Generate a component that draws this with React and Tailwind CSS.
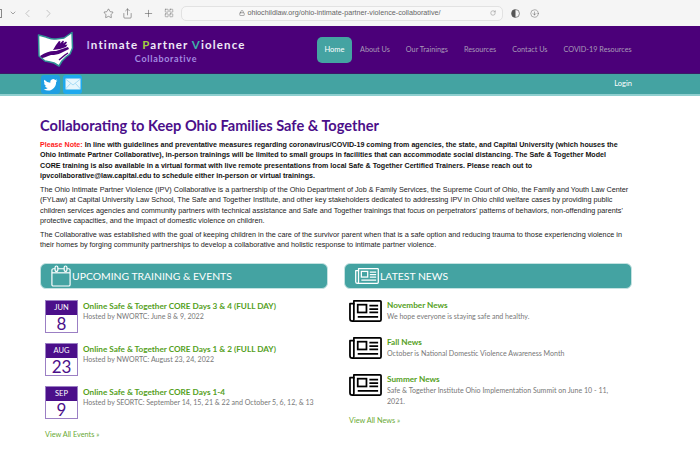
import { ChevronDown, ChevronLeft, ChevronRight, Star, Share, Plus, LayoutGrid, Lock, RotateCw, CircleArrowDown } from "lucide-react";

const events = [
  { month: "JUN", day: "8", title: "Online Safe & Together CORE Days 3 & 4 (FULL DAY)", host: "Hosted by NWORTC: June 8 & 9, 2022" },
  { month: "AUG", day: "23", title: "Online Safe & Together CORE Days 1 & 2 (FULL DAY)", host: "Hosted by NWORTC: August 23, 24, 2022" },
  { month: "SEP", day: "9", title: "Online Safe & Together CORE Days 1-4", host: "Hosted by SEORTC: September 14, 15, 21 & 22 and October 5, 6, 12, & 13" },
];

const news = [
  { title: "November News", text: "We hope everyone is staying safe and healthy." },
  { title: "Fall News", text: "October is National Domestic Violence Awareness Month" },
  { title: "Summer News", text: "Safe & Together Institute Ohio Implementation Summit on June 10 - 11, 2021." },
];

const nav = ["About Us", "Our Trainings", "Resources", "Contact Us", "COVID-19 Resources"];

const NewspaperIcon = ({ className, color = "#000" }) => (
  <svg viewBox="0 0 34 24" className={className} fill="none" stroke={color}>
    <path d="M5 1.500 H32 a1 1 0 0 1 1 1 V21 a1.500 1.500 0 0 1 -1.500 1.500 H3.500 A2.500 2.500 0 0 1 1 20 V4.500 H5 Z" strokeWidth="1.800" strokeLinejoin="round" />
    <path d="M5 4 V19.500 a3 3 0 0 1 -1 3" strokeWidth="1.800" />
    <rect x="9" y="5.500" width="9" height="8" strokeWidth="1.800" />
    <path d="M21 6.500 H30 M21 10 H30 M21 13.500 H30 M9 18 H30" strokeWidth="1.800" />
  </svg>
);

const CalendarIcon = () => (
  <svg viewBox="0 0 22 24" className="w-[20px] h-[22px]" fill="none" stroke="#fff" strokeWidth="1.300">
    <rect x="1" y="4" width="20" height="19" rx="1.500" />
    <path d="M1 8.500 H21" />
    <rect x="4.500" y="1" width="3" height="6" rx="1.500" fill="#44a3a2" />
    <rect x="14.500" y="1" width="3" height="6" rx="1.500" fill="#44a3a2" />
  </svg>
);

const OhioLogo = () => (
  <svg viewBox="0 0 38 38" className="w-[38px] h-[38px]">
    <path d="M1.500 4 L9 6 C13 7.500 15 8.500 19 8 L27 7 L35 1.500 L35.500 17 L33 23 L29 26 L25 30 L22 35 L17 32 L13 31 L8 30 L2 25 Z" fill="#fff" stroke="#2f8f95" strokeWidth="1.500" strokeLinejoin="round" />
    <path d="M3 25 C9 21 14 19.500 19 20 L31 16 L32 18 L24 22 C21 23.500 18 24 14 24 C10 25 7 27 5 27 Z" fill="#4b0079" />
    <path d="M16 19 L19 14 L22 10 L23.500 10.500 L23 12.500 L26 9.500 L27 10.500 L26 12.500 L29 10.500 L30 11.500 L28 14 L30.500 13.500 L29 16 L23 18 Z" fill="#4b0079" />
    <path d="M22 29 L28 24 L31 22" fill="none" stroke="#4b0079" strokeWidth="1.500" />
  </svg>
);

const TwitterTile = () => (
  <div className="w-[19px] h-[19px] rounded-[3px] bg-[#1f9fe2] flex items-center justify-center">
    <svg viewBox="0 0 24 24" className="w-[15px] h-[15px]" fill="#fff">
      <path d="M23 5.500c-.8.400-1.700.600-2.600.700.900-.600 1.600-1.400 2-2.500-.9.500-1.800.900-2.900 1.100A4.600 4.600 0 0 0 11.700 9 13 13 0 0 1 2.300 4.200a4.600 4.600 0 0 0 1.400 6.100c-.7 0-1.400-.2-2-.6 0 2.200 1.600 4.100 3.700 4.600-.7.200-1.400.2-2.100.1.600 1.800 2.300 3.100 4.300 3.200A9.300 9.300 0 0 1 1 19.500 13 13 0 0 0 21 8c.8-.7 1.500-1.500 2-2.500z" />
    </svg>
  </div>
);

const MailTile = () => (
  <div className="w-[19px] h-[19px] rounded-[3px] bg-[#1ea9ee] flex items-center justify-center">
    <svg viewBox="0 0 16 12" className="w-[16px] h-[12px]" fill="#e6f6fd" stroke="#7cc9f2" strokeWidth="0.600">
      <rect x="0.500" y="0.500" width="15" height="11" rx="0.800" />
      <path d="M0.500 1 L8 7 L15.500 1 M0.500 11 L5.500 5.500 M15.500 11 L10.500 5.500" fill="none" />
    </svg>
  </div>
);

const SectionBar = ({ icon, label }) => (
  <div className="h-[26px] rounded-[6px] bg-[#44a3a2] border border-[#c4e2e1] flex items-center pl-[10px] gap-[1px] text-white text-[10.400px] font-['Lato',sans-serif]">
    {icon}
    <span>{label}</span>
  </div>
);

const App = () => {
  return (
    <div className="w-[700px] h-[456px] overflow-hidden bg-white font-['Liberation_Sans',sans-serif]">
      {/* Browser toolbar */}
      <div className="h-[26px] bg-[#f5f5f5] flex items-center text-[#777]">
        <div className="w-[2px] h-[9px] border border-[#888] border-l-0 rounded-r-[1px]" />
        <ChevronDown size={8} className="ml-[7px]" />
        <ChevronLeft size={13} strokeWidth={1.200} className="ml-[4px] text-[#aaa]" />
        <ChevronRight size={13} strokeWidth={1.200} className="ml-[8px] text-[#aaa]" />
        <Star size={11} strokeWidth={1.200} className="ml-[48px] text-[#555]" />
        <Share size={11} strokeWidth={1.200} className="ml-[8px] text-[#555]" />
        <Plus size={11} strokeWidth={1.200} className="ml-[10px] text-[#555]" />
        <LayoutGrid size={10} strokeWidth={1.100} className="ml-[10px] text-[#666]" />
        <div className="ml-[7px] w-[322px] h-[15px] rounded-[5px] bg-[#f8f8f8] border border-[#e2e2e2] flex items-center">
          <div className="flex-1 flex items-center justify-center text-[7.200px] text-[#666] pl-[7px]">
            <Lock size={6} className="mr-[3px]" />
            <span>ohiochildlaw.org/ohio-intimate-partner-violence-collaborative/</span>
          </div>
          <RotateCw size={6} className="mr-[6px] text-[#888]" />
        </div>
        <svg viewBox="0 0 10 10" className="w-[9px] h-[9px] ml-[8px]">
          <circle cx="5" cy="5" r="4.400" fill="none" stroke="#555" strokeWidth="0.700" />
          <path d="M5 .6a4.400 4.400 0 0 0 0 8.800z" fill="#555" />
        </svg>
        <CircleArrowDown size={9} strokeWidth={1.200} className="ml-[10px] text-[#555]" />
      </div>

      {/* Site header */}
      <header className="h-[47px] bg-[#4b0079] flex items-center">
        <div className="ml-[37px] shrink-0">
          <OhioLogo />
        </div>
        <div className="ml-[11px] pt-[3px] w-[160px] font-['Lato',sans-serif] text-center shrink-0">
          <div className="text-[11.500px] leading-[14px] font-bold tracking-[1.150px] text-[#efe9f7] whitespace-nowrap">
            <span className="text-[#b9a3e8]">I</span>ntimate <span className="text-[#a3cf3f]">P</span>artner <span className="text-[#3fb0a8]">V</span>iolence
          </div>
          <div className="mt-[1px] text-[9px] leading-[11px] font-bold tracking-[0.700px] text-[#a48be0]">Collaborative</div>
        </div>
        <div className="ml-[71px] w-[35px] h-[26px] rounded-[5px] bg-[#44a3a2] text-white text-[7.500px] font-['Lato',sans-serif] flex items-center justify-center">
          Home
        </div>
        <nav className="ml-[8px] pt-[1px] flex gap-[16px] text-[7.250px] text-[#a89bb8] font-['Lato',sans-serif] whitespace-nowrap">
          {nav.map((item) => (
            <span key={item}>{item}</span>
          ))}
        </nav>
      </header>

      {/* Social bar */}
      <div className="h-[23px] bg-[#44a3a2] border-t border-[#3b1a66] border-b-2 border-b-[#8fcfcf] flex items-center justify-between">
        <div className="ml-[41px] flex gap-[3px]">
          <TwitterTile />
          <MailTile />
        </div>
        <span className="mr-[68px] text-[7.500px] text-white font-['Lato',sans-serif]">Login</span>
      </div>

      {/* Content */}
      <main className="pl-[40px] pr-[68px] pt-[20px]">
        <h1 className="text-[14.600px] leading-[20px] font-bold text-[#4b0f8a] font-['Lato',sans-serif] whitespace-nowrap">
          Collaborating to Keep Ohio Families Safe &amp; Together
        </h1>
        <div className="mt-[4px] text-[7.250px] leading-[10.350px] text-[#222] whitespace-nowrap">
          <p className="font-bold text-[7.120px] text-[#111]">
            <span className="text-[#ff1a1a]">Please Note:</span> In line with guidelines and preventative measures regarding coronavirus/COVID-19 coming from agencies, the state, and Capital University (which houses the<br />
            Ohio Intimate Partner Collaborative), in-person trainings will be limited to small groups in facilities that can accommodate social distancing. The Safe &amp; Together Model<br />
            CORE training is also available in a virtual format with live remote presentations from local Safe &amp; Together Certified Trainers. Please reach out to<br />
            ipvcollaborative@law.capital.edu to schedule either in-person or virtual trainings.
          </p>
          <p className="mt-[3.500px]">
            The Ohio Intimate Partner Violence (IPV) Collaborative is a partnership of the Ohio Department of Job &amp; Family Services, the Supreme Court of Ohio, the Family and Youth Law Center<br />
            (FYLaw) at Capital University Law School, The Safe and Together Institute, and other key stakeholders dedicated to addressing IPV in Ohio child welfare cases by providing public<br />
            children services agencies and community partners with technical assistance and Safe and Together trainings that focus on perpetrators' patterns of behaviors, non-offending parents'<br />
            protective capacities, and the impact of domestic violence on children.
          </p>
          <p className="mt-[3.500px]">
            The Collaborative was established with the goal of keeping children in the care of the survivor parent when that is a safe option and reducing trauma to those experiencing violence in<br />
            their homes by forging community partnerships to develop a collaborative and holistic response to intimate partner violence.
          </p>
        </div>

        <div className="mt-[13px] grid grid-cols-2 gap-[16px] w-[592px] font-['Lato',sans-serif]">
          {/* Events */}
          <section>
            <SectionBar icon={<CalendarIcon />} label="UPCOMING TRAINING & EVENTS" />
            <div className="mt-[11px] ml-[5px] flex flex-col gap-[10px]">
              {events.map((e) => (
                <div key={e.month} className="flex gap-[5px] h-[33px]">
                  <div className="w-[33px] h-[33px] border border-[#9b7fc4] flex flex-col items-center shrink-0">
                    <div className="w-full h-[14px] bg-[#4b0f8a] text-white text-[7.500px] leading-[14px] text-center">{e.month}</div>
                    <div className="text-[#4b0f8a] text-[17px] leading-[18px]">{e.day}</div>
                  </div>
                  <div>
                    <div className="text-[8.200px] leading-[12px] font-bold text-[#54a01c] whitespace-nowrap">{e.title}</div>
                    <div className="mt-[-1px] text-[7.060px] leading-[12px] text-[#777] whitespace-nowrap">{e.host}</div>
                  </div>
                </div>
              ))}
            </div>
            <div className="mt-[10px] ml-[5px] text-[7.300px] leading-[12px] text-[#6aaa35]">View All Events »</div>
          </section>

          {/* News */}
          <section>
            <SectionBar icon={<NewspaperIcon className="w-[24px] h-[18px]" color="#fff" />} label="LATEST NEWS" />
            <div className="mt-[10px] ml-[5px] flex flex-col gap-[13px]">
              {news.map((n) => (
                <div key={n.title} className="flex gap-[5px]">
                  <NewspaperIcon className="w-[33px] h-[24px] shrink-0" />
                  <div>
                    <div className="text-[8.200px] leading-[12px] font-bold text-[#54a01c]">{n.title}</div>
                    <div className="text-[7.060px] leading-[11px] text-[#777] w-[240px]">{n.text}</div>
                  </div>
                </div>
              ))}
            </div>
            <div className="mt-[8px] ml-[5px] text-[7.300px] leading-[12px] text-[#6aaa35]">View All News »</div>
          </section>
        </div>
      </main>
    </div>
  );
};

export default App;
